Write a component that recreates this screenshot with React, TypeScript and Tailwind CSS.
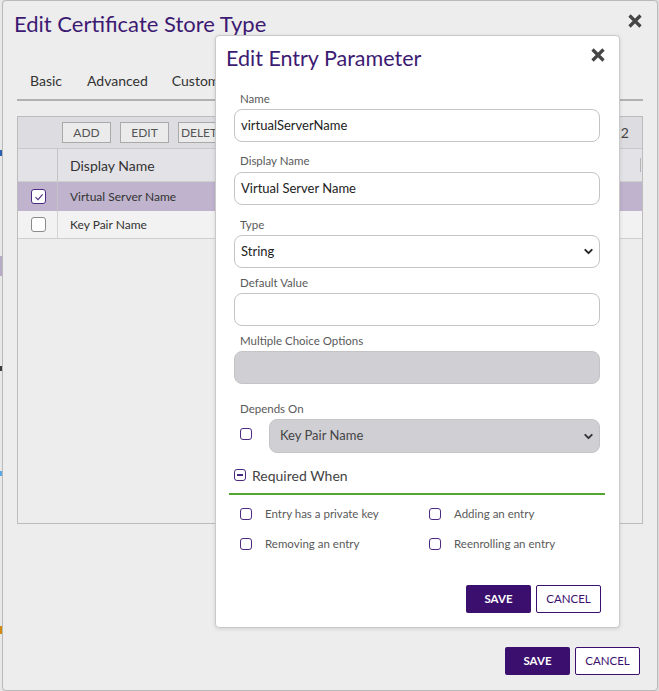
import { ChevronDown } from "lucide-react";

const purple = "#3b0f6e";

const XIcon = () => (
  <svg width="16" height="16" viewBox="0 0 16 16">
    <path d="M2.5 2.5 L13.5 13.5 M13.5 2.5 L2.5 13.5" stroke="#454545" strokeWidth="3.2" strokeLinecap="butt" />
  </svg>
);

const Box = ({ checked = false, gray = false, size = 12 }: { checked?: boolean; gray?: boolean; size?: number }) => (
  <span
    className={`inline-flex items-center justify-center shrink-0 rounded-[3px] bg-white border-[1.5px] ${gray ? "border-[#8a8a8a]" : "border-[#4b2a84]"}`}
    style={{ width: size, height: size }}
  >
    {checked && (
      <svg width="10" height="10" viewBox="0 0 10 10">
        <path d="M1.5 5.2 L4 7.6 L8.6 2.4" stroke="#4b2a84" strokeWidth="1.1" fill="none" />
      </svg>
    )}
  </span>
);

const Label = ({ children, className = "" }: { children: React.ReactNode; className?: string }) => (
  <div className={`pl-[6px] text-[11.5px] leading-[14px] text-[#5a5a5a] ${className}`}>{children}</div>
);

const inputCls = "h-[33px] w-full rounded-[8px] border border-[#c4c4c4] bg-white px-[6px] flex items-center text-[13px] text-[#222]";

export default function App() {
  return (
    <div className="w-[659px] h-[691px] flex bg-[#dcdcdc] font-['Lato',sans-serif] overflow-hidden">
      <div className="w-[2px] shrink-0 flex flex-col bg-[#e8e8e8]">
        <div className="h-[150px]" />
        <div className="h-[6px] bg-[#2b5fb0]" />
        <div className="h-[100px]" />
        <div className="h-[20px] bg-[#b7abc8]" />
        <div className="h-[90px]" />
        <div className="h-[5px] bg-[#3a3a3a]" />
        <div className="h-[100px]" />
        <div className="h-[5px] bg-[#5aa9e6]" />
        <div className="h-[150px]" />
        <div className="h-[8px] bg-[#d08a10]" />
      </div>

      <div className="relative w-[656px] h-[691px] shrink-0 border border-[#b9b9b9] rounded-[4px] bg-[#ededed] flex flex-col">
        {/* header */}
        <div className="flex items-start justify-between pl-[11px] pr-[14px] pt-[9px]">
          <h1 className="text-[22px] leading-[28px] text-[#3d1a72]">Edit Certificate Store Type</h1>
          <div className="mt-[3px]"><XIcon /></div>
        </div>

        {/* tabs */}
        <div className="mx-[14px] mt-[33px] flex text-[14px] leading-[20px] text-[#333]">
          <span className="px-[13px]">Basic</span>
          <span className="px-[12px]">Advanced</span>
          <span className="px-[12px]">Custom Fields</span>
        </div>
        <div className="mx-[14px] mt-[8px] h-[2px] bg-[#b2b2b2]" />

        {/* table panel */}
        <div className="mx-[14px] mt-[15px] h-[408px] border border-[#bcbcbc] flex flex-col">
          <div className="h-[32px] bg-[#dddce1] border-b border-[#c8c8c8] flex items-center pl-[44px] pr-[13px] gap-[9px]">
            {["ADD", "EDIT", "DELETE"].map((b) => (
              <span key={b} className="h-[21px] w-[49px] border border-[#a9a9a9] bg-[#ebebeb] flex items-center justify-center text-[12px] text-[#555]">{b}</span>
            ))}
            <span className="ml-auto text-[14px] text-[#444]">1 - 2 of 2</span>
          </div>
          <div className="h-[33px] bg-[#e3e2e7] flex border-b border-[#cfcfcf]">
            <div className="w-[40px] border-r border-[#c3c3c3]" />
            <div className="flex-1 flex items-center pl-[12px] text-[14px] text-[#333]">Display Name</div>
            <div className="w-[1px] my-[9px] bg-[#b5b5b5] mr-[1px]" />
          </div>
          <div className="h-[29px] bg-[#bfb3cd] flex">
            <div className="w-[40px] border-r border-[#c3c3c3] flex items-center pl-[13px]"><Box checked size={15} /></div>
            <div className="flex-1 flex items-center pl-[12px] text-[12px] text-[#333]">Virtual Server Name</div>
          </div>
          <div className="h-[28px] bg-[#f2f2f2] flex border-b border-[#cfcfcf]">
            <div className="w-[40px] border-r border-[#d3d3d3] flex items-center pl-[13px]"><Box gray size={15} /></div>
            <div className="flex-1 flex items-center pl-[12px] text-[12px] text-[#333]">Key Pair Name</div>
          </div>
        </div>

        {/* footer */}
        <div className="mt-auto mb-[15px] mr-[17px] flex justify-end gap-[5px]">
          <span className="h-[28px] w-[65px] rounded-[2px] flex items-center justify-center text-[11.5px] font-bold text-white" style={{ background: purple }}>SAVE</span>
          <span className="h-[28px] w-[65px] rounded-[2px] border border-[#3b0f6e] bg-white flex items-center justify-center text-[11.5px] text-[#3b0f6e]">CANCEL</span>
        </div>

        {/* inner dialog */}
        <div className="absolute left-[212px] top-[34px] w-[405px] h-[593px] bg-white border border-[#c9c9c9] rounded-[4px] shadow-[0_1px_4px_rgba(0,0,0,0.12)] flex flex-col">
          <div className="flex items-start justify-between pl-[10px] pr-[13px] pt-[10px]">
            <h2 className="text-[21.5px] leading-[24px] text-[#3d1a72]">Edit Entry Parameter</h2>
            <div className="mt-[1px]"><XIcon /></div>
          </div>

          <div className="ml-[18px] w-[366px] flex flex-col">
            <Label className="mt-[22px]">Name</Label>
            <div className={`${inputCls} mt-[3px]`}>virtualServerName</div>

            <Label className="mt-[12px]">Display Name</Label>
            <div className={`${inputCls} mt-[4px]`}>Virtual Server Name</div>

            <Label className="mt-[13px]">Type</Label>
            <div className={`${inputCls} mt-[3px] justify-between pr-[4px]`}>
              <span>String</span>
              <ChevronDown size={13} strokeWidth={3.5} color="#222" />
            </div>

            <Label className="mt-[8px]">Default Value</Label>
            <div className={`${inputCls} mt-[3px]`} />

            <Label className="mt-[8px]">Multiple Choice Options</Label>
            <div className="mt-[3px] h-[33px] w-full rounded-[8px] border border-[#c4c4c4] bg-[#d0cfd4]" />

            <Label className="mt-[18px]">Depends On</Label>
            <div className="mt-[3px] flex items-center">
              <div className="w-[35px] pl-[6px] flex items-start pb-[4px]"><Box size={12} /></div>
              <div className="flex-1 h-[34px] rounded-[8px] border border-[#c4c4c4] bg-[#d0cfd4] flex items-center justify-between pl-[10px] pr-[4px] text-[13px] text-[#444]">
                <span>Key Pair Name</span>
                <ChevronDown size={13} strokeWidth={3.5} color="#333" />
              </div>
            </div>

            <div className="mt-[12px] flex items-center gap-[6px] h-[20px]">
              <span className="w-[12px] h-[12px] rounded-[3px] border-[1.5px] border-[#4b2a84] flex items-center justify-center">
                <span className="w-[6px] h-[1.5px] bg-[#4b2a84]" />
              </span>
              <span className="text-[14px] text-[#444]">Required When</span>
            </div>
          </div>

          <div className="ml-[13px] w-[376px] mt-[8px] h-[1.5px] bg-[#55a630]" />

          <div className="ml-[24px] mt-[12px] grid grid-cols-[189px_1fr] gap-y-[16px] text-[11.5px] leading-[14px] text-[#5a5a5a]">
            {["Entry has a private key", "Adding an entry", "Removing an entry", "Reenrolling an entry"].map((t) => (
              <div key={t} className="flex items-center gap-[13px]"><Box size={12} /><span>{t}</span></div>
            ))}
          </div>

          <div className="mt-[34px] mr-[18px] flex justify-end gap-[5px]">
            <span className="h-[28px] w-[65px] rounded-[2px] flex items-center justify-center text-[11.5px] font-bold text-white" style={{ background: purple }}>SAVE</span>
            <span className="h-[28px] w-[65px] rounded-[2px] border border-[#3b0f6e] bg-white flex items-center justify-center text-[11.5px] text-[#3b0f6e]">CANCEL</span>
          </div>
        </div>
      </div>
    </div>
  );
}
